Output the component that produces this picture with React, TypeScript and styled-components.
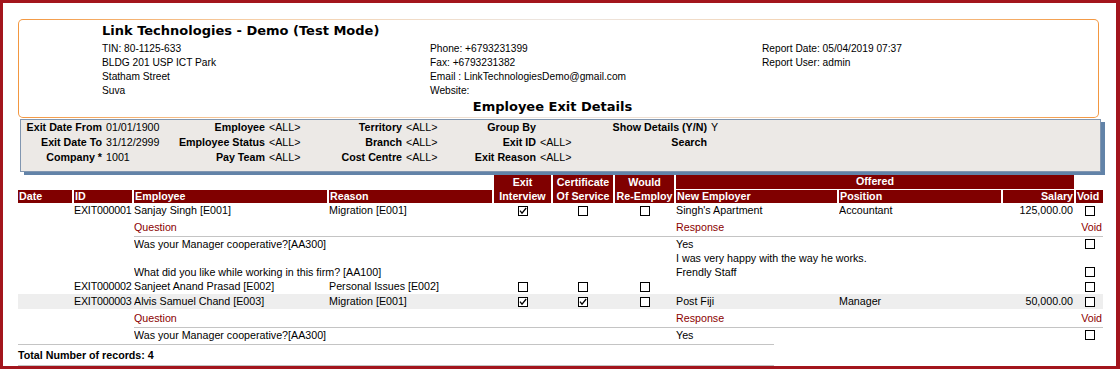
import React from "react";
import styled, { createGlobalStyle } from "styled-components";

const GlobalStyle = createGlobalStyle`
  html, body {
    margin: 0;
    padding: 0;
    background: #fff;
  }
  body {
    font-family: "Liberation Sans", Arial, sans-serif;
    color: #000;
  }
`;

// column widths of the report grid (Date .. Void)
const COLS = "54px 58px 193px 163px 57px 60px 59px 161px 162px 71px 27px";
const DETAIL_COLS = "540px 398px 27px";

const Frame = styled.div`
  width: 1120px;
  height: 369px;
  box-sizing: border-box;
  border: 3px solid #a3151d;
  border-right-width: 4px;
  padding: 16px 0 0 15px;
  background: #fff;
  overflow: hidden;
`;

const HeadOutline = styled.div`
  width: 1081px;
  height: 99px;
  box-sizing: border-box;
  padding: 1px;
  border-radius: 5px;
  background: linear-gradient(
    90deg,
    #f39740 0%,
    #f6cfa8 22%,
    #ece6e2 50%,
    #f6cfa8 78%,
    #f39740 100%
  );
`;

const HeadInner = styled.div`
  height: 100%;
  box-sizing: border-box;
  background: #fff;
  border-radius: 4px;
  padding-top: 4px;
`;

const CompanyName = styled.div`
  padding-left: 83px;
  font-family: "DejaVu Sans", Verdana, sans-serif;
  font-weight: bold;
  font-size: 13px;
  line-height: 14px;
  margin-bottom: 4px;
`;

const InfoGrid = styled.div`
  padding-left: 83px;
  display: grid;
  grid-template-columns: 328px 332px 1fr;
  font-size: 10.2px;
  line-height: 14px;
  height: 56px;
`;

const InfoCol = styled.div`
  display: flex;
  flex-direction: column;
  white-space: nowrap;
`;

const ReportTitle = styled.div`
  margin-top: 2px;
  padding-right: 12px;
  text-align: center;
  font-family: "DejaVu Sans", Verdana, sans-serif;
  font-weight: bold;
  font-size: 13px;
  line-height: 14px;
`;

const FilterBox = styled.div`
  margin: 1px 0 0 2px;
  width: 1081px;
  height: 53px;
  box-sizing: border-box;
  background: #ece9e6;
  border: 1px solid #8196b0;
  box-shadow: 4px 3px 0 #6283a8;
  display: grid;
  grid-template-columns: 81px 73px 90px 47px 90px 44px 90px 50px 121px 1fr;
  grid-auto-rows: 15px;
  align-content: start;
  font-size: 10.7px;
  line-height: 15px;
`;

const FilterLabel = styled.div`
  font-weight: bold;
  text-align: right;
  white-space: nowrap;
`;

const FilterValue = styled.div`
  padding-left: 4px;
  white-space: nowrap;
`;

const HeadGrid = styled.div`
  margin-top: 3px;
  width: 1085px;
  display: grid;
  grid-template-columns: ${COLS};
  grid-template-rows: 14px 13px;
  column-gap: 2px;
  row-gap: 1px;
`;

const HeadCell = styled.div<{ $col: string; $row: string; $align?: string }>`
  grid-column: ${(p) => p.$col};
  grid-row: ${(p) => p.$row};
  background: #800000;
  color: #fff;
  font-weight: bold;
  font-size: 10.7px;
  line-height: ${(p) => (p.$row === "1 / 3" ? "14px" : "13px")};
  text-align: ${(p) => p.$align || "left"};
  padding: 0 1px;
  white-space: nowrap;
  overflow: hidden;
`;

const Row = styled.div<{ $shade?: boolean }>`
  width: 1085px;
  display: grid;
  grid-template-columns: ${COLS};
  column-gap: 2px;
  height: 15px;
  line-height: 15px;
  font-size: 10.7px;
  background: ${(p) => (p.$shade ? "#eeeeee" : "transparent")};
`;

const Cell = styled.div<{ $align?: string }>`
  text-align: ${(p) => p.$align || "left"};
  padding-right: ${(p) => (p.$align === "right" ? "1px" : "0")};
  white-space: nowrap;
  overflow: hidden;
`;

const IdCell = styled.div`
  white-space: nowrap;
  letter-spacing: -0.2px;
`;

const CheckCell = styled.div`
  display: flex;
  align-items: center;
  justify-content: center;
`;

const Detail = styled.div`
  margin-left: 116px;
  width: 969px;
`;

const DetailHead = styled.div`
  display: grid;
  grid-template-columns: ${DETAIL_COLS};
  column-gap: 2px;
  padding: 2px 0;
  line-height: 14px;
  font-size: 10.7px;
  color: #8b0000;
  border-bottom: 1px solid #c4c4c4;
`;

const QaRow = styled.div`
  display: grid;
  grid-template-columns: ${DETAIL_COLS};
  column-gap: 2px;
  line-height: 14px;
  font-size: 10.7px;
`;

const VoidCell = styled.div`
  display: flex;
  justify-content: center;
  align-items: flex-start;
  padding-top: 2px;
`;

const Footer = styled.div`
  margin-top: 2px;
  width: 756px;
  border-top: 1px solid #c4c4c4;
  border-bottom: 1px solid #c4c4c4;
  font-size: 10.7px;
  font-weight: bold;
  line-height: 20px;
`;

const BoxSvg = styled.svg`
  display: block;
`;

function Check({ on }: { on?: boolean }) {
  return (
    <BoxSvg width="10" height="10" viewBox="0 0 10 10">
      <rect x="0.5" y="0.5" width="9" height="9" fill="#fff" stroke="#000" />
      {on && <path d="M2 4.6 L4 7.2 L8.2 2" fill="none" stroke="#000" strokeWidth="1.3" />}
    </BoxSvg>
  );
}

const filters: [string, string][][] = [
  [["Exit Date From", "01/01/1900"], ["Employee", "<ALL>"], ["Territory", "<ALL>"], ["Group By", ""], ["Show Details (Y/N)", "Y"]],
  [["Exit Date To", "31/12/2999"], ["Employee Status", "<ALL>"], ["Branch", "<ALL>"], ["Exit ID", "<ALL>"], ["Search", ""]],
  [["Company *", "1001"], ["Pay Team", "<ALL>"], ["Cost Centre", "<ALL>"], ["Exit Reason", "<ALL>"], ["", ""]],
];

interface Qa {
  question: string;
  answers: string[];
}

interface ExitRecord {
  id: string;
  employee: string;
  reason: string;
  interview: boolean;
  certificate: boolean;
  reEmploy: boolean;
  newEmployer: string;
  position: string;
  salary: string;
  shade?: boolean;
  qa: Qa[];
}

const records: ExitRecord[] = [
  {
    id: "EXIT000001",
    employee: "Sanjay Singh [E001]",
    reason: "Migration [E001]",
    interview: true,
    certificate: false,
    reEmploy: false,
    newEmployer: "Singh's Apartment",
    position: "Accountant",
    salary: "125,000.00",
    qa: [
      { question: "Was your Manager cooperative?[AA300]", answers: ["Yes", "I was very happy with the way he works."] },
      { question: "What did you like while working in this firm? [AA100]", answers: ["Frendly Staff"] },
    ],
  },
  {
    id: "EXIT000002",
    employee: "Sanjeet Anand Prasad [E002]",
    reason: "Personal Issues [E002]",
    interview: false,
    certificate: false,
    reEmploy: false,
    newEmployer: "",
    position: "",
    salary: "",
    qa: [],
  },
  {
    id: "EXIT000003",
    employee: "Alvis Samuel Chand [E003]",
    reason: "Migration [E001]",
    interview: true,
    certificate: true,
    reEmploy: false,
    newEmployer: "Post Fiji",
    position: "Manager",
    salary: "50,000.00",
    shade: true,
    qa: [{ question: "Was your Manager cooperative?[AA300]", answers: ["Yes"] }],
  },
];

export default function App() {
  return (
    <>
      <GlobalStyle />
      <Frame>
        <HeadOutline>
          <HeadInner>
            <CompanyName>Link Technologies - Demo (Test Mode)</CompanyName>
            <InfoGrid>
              <InfoCol>
                <span>TIN: 80-1125-633</span>
                <span>BLDG 201 USP ICT Park</span>
                <span>Statham Street</span>
                <span>Suva</span>
              </InfoCol>
              <InfoCol>
                <span>Phone: +6793231399</span>
                <span>Fax: +6793231382</span>
                <span>Email : LinkTechnologiesDemo@gmail.com</span>
                <span>Website:</span>
              </InfoCol>
              <InfoCol>
                <span>Report Date: 05/04/2019 07:37</span>
                <span>Report User: admin</span>
              </InfoCol>
            </InfoGrid>
            <ReportTitle>Employee Exit Details</ReportTitle>
          </HeadInner>
        </HeadOutline>

        <FilterBox>
          {filters.map((row) =>
            row.map(([label, value], i) => (
              <React.Fragment key={label + i}>
                <FilterLabel>{label}</FilterLabel>
                <FilterValue>{value}</FilterValue>
              </React.Fragment>
            ))
          )}
        </FilterBox>

        <HeadGrid>
          <HeadCell $col="1" $row="2">Date</HeadCell>
          <HeadCell $col="2" $row="2">ID</HeadCell>
          <HeadCell $col="3" $row="2">Employee</HeadCell>
          <HeadCell $col="4" $row="2">Reason</HeadCell>
          <HeadCell $col="5" $row="1 / 3" $align="center">
            Exit
            <br />
            Interview
          </HeadCell>
          <HeadCell $col="6" $row="1 / 3" $align="center">
            Certificate
            <br />
            Of Service
          </HeadCell>
          <HeadCell $col="7" $row="1 / 3" $align="center">
            Would
            <br />
            Re-Employ
          </HeadCell>
          <HeadCell $col="8 / 11" $row="1" $align="center">Offered</HeadCell>
          <HeadCell $col="8" $row="2">New Employer</HeadCell>
          <HeadCell $col="9" $row="2">Position</HeadCell>
          <HeadCell $col="10" $row="2" $align="right">Salary</HeadCell>
          <HeadCell $col="11" $row="2">Void</HeadCell>
        </HeadGrid>

        {records.map((r) => (
          <React.Fragment key={r.id}>
            <Row $shade={r.shade}>
              <Cell />
              <IdCell>{r.id}</IdCell>
              <Cell>{r.employee}</Cell>
              <Cell>{r.reason}</Cell>
              <CheckCell><Check on={r.interview} /></CheckCell>
              <CheckCell><Check on={r.certificate} /></CheckCell>
              <CheckCell><Check on={r.reEmploy} /></CheckCell>
              <Cell>{r.newEmployer}</Cell>
              <Cell>{r.position}</Cell>
              <Cell $align="right">{r.salary}</Cell>
              <CheckCell><Check /></CheckCell>
            </Row>
            {r.qa.length > 0 && (
              <Detail>
                <DetailHead>
                  <span>Question</span>
                  <span>Response</span>
                  <Cell $align="right">Void</Cell>
                </DetailHead>
                {r.qa.map((q) => (
                  <QaRow key={q.question}>
                    <Cell>{q.question}</Cell>
                    <div>
                      {q.answers.map((a) => (
                        <div key={a}>{a}</div>
                      ))}
                    </div>
                    <VoidCell><Check /></VoidCell>
                  </QaRow>
                ))}
              </Detail>
            )}
          </React.Fragment>
        ))}

        <Footer>Total Number of records: 4</Footer>
      </Frame>
    </>
  );
}
